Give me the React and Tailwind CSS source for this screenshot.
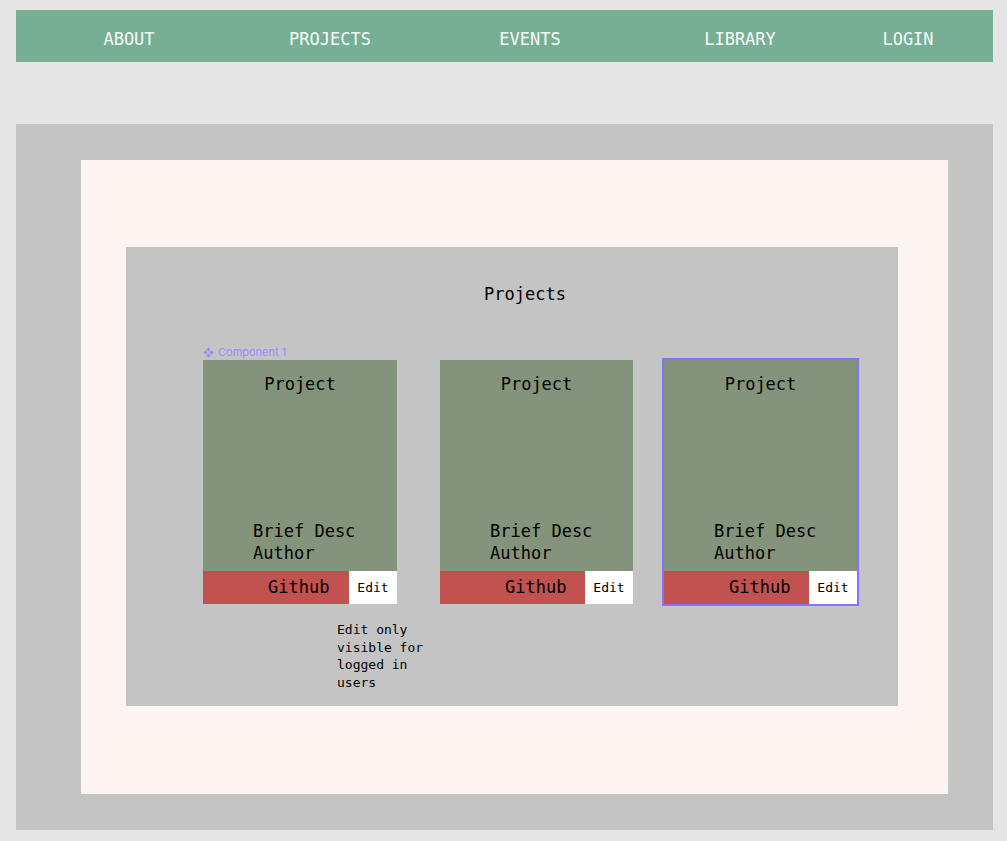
import React from "react";

const mono = { fontFamily: '"DejaVu Sans Mono", "Liberation Mono", monospace' };

function ComponentIcon() {
  return (
    <svg width="11" height="11" viewBox="0 0 10 10" className="shrink-0">
      <path d="M5 0.3 L7 2.3 L5 4.3 L3 2.3 Z" fill="#9b8afb" />
      <path d="M5 5.7 L7 7.7 L5 9.7 L3 7.7 Z" fill="#9b8afb" />
      <path d="M0.3 5 L2.3 3 L4.3 5 L2.3 7 Z" fill="#9b8afb" />
      <path d="M5.7 5 L7.7 3 L9.7 5 L7.7 7 Z" fill="#9b8afb" />
    </svg>
  );
}

function Card({ width, selected, label }) {
  return (
    <div
      className={`relative h-[244px] flex flex-col shrink-0 ${selected ? "outline-2 outline-[#8574fb]" : ""}`}
      style={{ width }}
    >
      {label && (
        <div
          className="absolute -top-[15px] left-0 flex items-center gap-[4px] text-[11px] leading-[14px] text-[#9b8afb]"
          style={{ fontFamily: 'Inter, "Noto Sans", sans-serif' }}
        >
          <ComponentIcon />
          <span>Component 1</span>
        </div>
      )}
      <div className="h-[211px] bg-[#84937b] flex flex-col text-black text-[17px]" style={mono}>
        <div className="pt-[12px] leading-[24px] text-center">Project</div>
        <div className="mt-auto pb-[7px] pl-[50px] leading-[22px]">
          <div>Brief Desc</div>
          <div>Author</div>
        </div>
      </div>
      <div className="h-[33px] flex" style={mono}>
        <div className="flex-1 bg-[#c1524f] pl-[65px] flex items-center text-[17px] text-black">Github</div>
        <div className="w-[48px] bg-white flex items-center justify-center text-[13px] text-black">Edit</div>
      </div>
    </div>
  );
}

export default function App() {
  const navItems = [
    ["ABOUT", 226],
    ["PROJECTS", 176],
    ["EVENTS", 224],
    ["LIBRARY", 196],
    ["LOGIN", 140],
  ];
  return (
    <div className="min-h-[841px] bg-[#e5e5e5] pl-4 pr-[14px] pt-[10px]">
      <nav className="h-[52px] bg-[#76af93] flex items-center pt-[7px] text-[17px] text-[#f7fbf8]" style={mono}>
        {navItems.map(([t, w]) => (
          <div key={t} className="text-center shrink-0" style={{ width: w }}>
            {t}
          </div>
        ))}
      </nav>
      <div className="mt-[62px] h-[706px] bg-[#c4c4c4] pt-[36px] pl-[65px]">
        <div className="w-[867px] h-[634px] bg-[#fdf4f1] pt-[87px] pl-[45px]">
          <div className="w-[772px] h-[459px] bg-[#c4c4c4]">
            <div className="pt-[35px] pl-[26px] leading-[24px] text-center text-[17px] text-black" style={mono}>
              Projects
            </div>
            <div className="mt-[54px] pl-[77px] flex">
              <Card width={194} label />
              <div className="w-[43px] shrink-0" />
              <Card width={193} />
              <div className="w-[31px] shrink-0" />
              <Card width={193} selected />
            </div>
            <div
              className="mt-[17px] ml-[211px] w-[92px] text-[13px] leading-[17.5px] text-black"
              style={mono}
            >
              Edit only visible for logged in users
            </div>
          </div>
        </div>
      </div>
    </div>
  );
}
